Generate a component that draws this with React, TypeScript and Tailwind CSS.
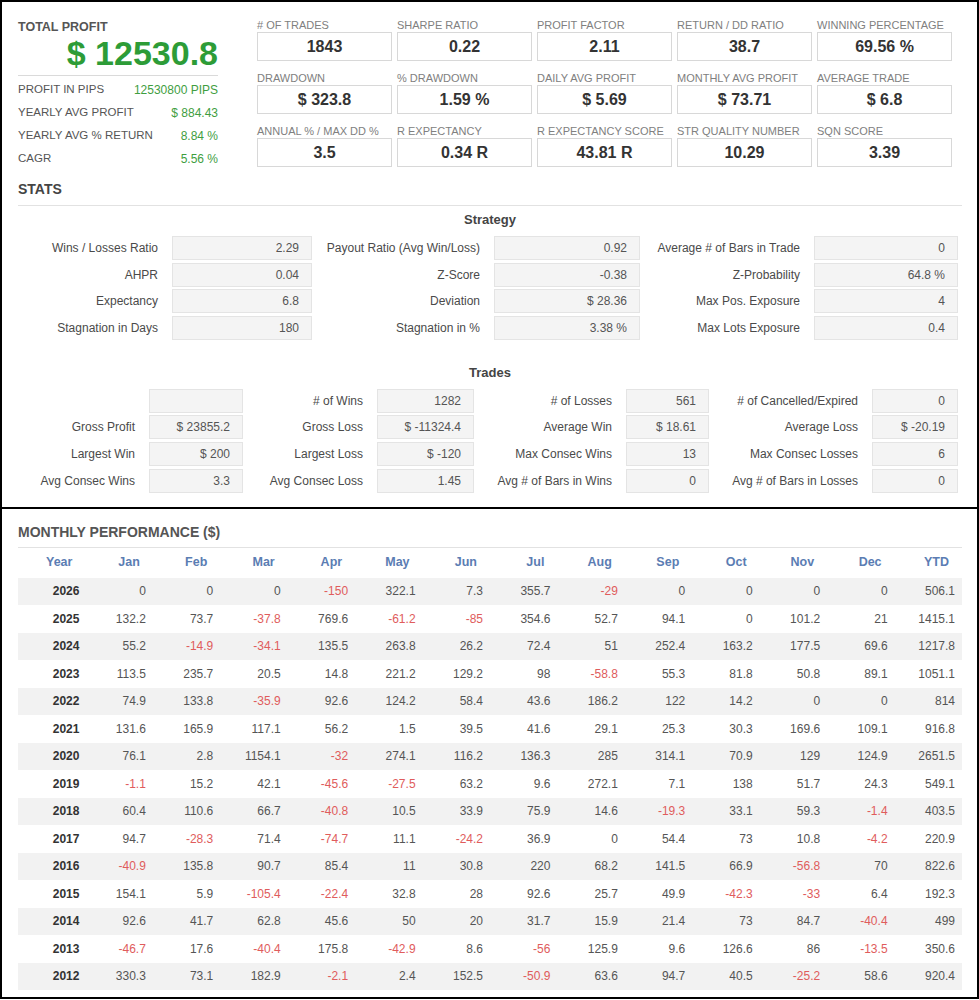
const metrics: [string, string][][] = [
  [
    ['# of Trades', '1843'],
    ['Sharpe Ratio', '0.22'],
    ['Profit Factor', '2.11'],
    ['Return / DD Ratio', '38.7'],
    ['Winning Percentage', '69.56 %'],
  ],
  [
    ['Drawdown', '$ 323.8'],
    ['% Drawdown', '1.59 %'],
    ['Daily Avg Profit', '$ 5.69'],
    ['Monthly Avg Profit', '$ 73.71'],
    ['Average Trade', '$ 6.8'],
  ],
  [
    ['Annual % / Max DD %', '3.5'],
    ['R Expectancy', '0.34 R'],
    ['R Expectancy Score', '43.81 R'],
    ['STR Quality Number', '10.29'],
    ['SQN Score', '3.39'],
  ],
];

const summary: [string, string][] = [
  ['PROFIT IN PIPS', '12530800 PIPS'],
  ['YEARLY AVG PROFIT', '$ 884.43'],
  ['YEARLY AVG % RETURN', '8.84 %'],
  ['CAGR', '5.56 %'],
];

const strategy: string[][] = [
  ['Wins / Losses Ratio', '2.29', 'Payout Ratio (Avg Win/Loss)', '0.92', 'Average # of Bars in Trade', '0'],
  ['AHPR', '0.04', 'Z-Score', '-0.38', 'Z-Probability', '64.8 %'],
  ['Expectancy', '6.8', 'Deviation', '$ 28.36', 'Max Pos. Exposure', '4'],
  ['Stagnation in Days', '180', 'Stagnation in %', '3.38 %', 'Max Lots Exposure', '0.4'],
];

const trades: string[][] = [
  ['', '', '# of Wins', '1282', '# of Losses', '561', '# of Cancelled/Expired', '0'],
  ['Gross Profit', '$ 23855.2', 'Gross Loss', '$ -11324.4', 'Average Win', '$ 18.61', 'Average Loss', '$ -20.19'],
  ['Largest Win', '$ 200', 'Largest Loss', '$ -120', 'Max Consec Wins', '13', 'Max Consec Losses', '6'],
  ['Avg Consec Wins', '3.3', 'Avg Consec Loss', '1.45', 'Avg # of Bars in Wins', '0', 'Avg # of Bars in Losses', '0'],
];

const months = ['Year', 'Jan', 'Feb', 'Mar', 'Apr', 'May', 'Jun', 'Jul', 'Aug', 'Sep', 'Oct', 'Nov', 'Dec', 'YTD'];

const monthly: string[][] = [
  ['2026', '0', '0', '0', '-150', '322.1', '7.3', '355.7', '-29', '0', '0', '0', '0', '506.1'],
  ['2025', '132.2', '73.7', '-37.8', '769.6', '-61.2', '-85', '354.6', '52.7', '94.1', '0', '101.2', '21', '1415.1'],
  ['2024', '55.2', '-14.9', '-34.1', '135.5', '263.8', '26.2', '72.4', '51', '252.4', '163.2', '177.5', '69.6', '1217.8'],
  ['2023', '113.5', '235.7', '20.5', '14.8', '221.2', '129.2', '98', '-58.8', '55.3', '81.8', '50.8', '89.1', '1051.1'],
  ['2022', '74.9', '133.8', '-35.9', '92.6', '124.2', '58.4', '43.6', '186.2', '122', '14.2', '0', '0', '814'],
  ['2021', '131.6', '165.9', '117.1', '56.2', '1.5', '39.5', '41.6', '29.1', '25.3', '30.3', '169.6', '109.1', '916.8'],
  ['2020', '76.1', '2.8', '1154.1', '-32', '274.1', '116.2', '136.3', '285', '314.1', '70.9', '129', '124.9', '2651.5'],
  ['2019', '-1.1', '15.2', '42.1', '-45.6', '-27.5', '63.2', '9.6', '272.1', '7.1', '138', '51.7', '24.3', '549.1'],
  ['2018', '60.4', '110.6', '66.7', '-40.8', '10.5', '33.9', '75.9', '14.6', '-19.3', '33.1', '59.3', '-1.4', '403.5'],
  ['2017', '94.7', '-28.3', '71.4', '-74.7', '11.1', '-24.2', '36.9', '0', '54.4', '73', '10.8', '-4.2', '220.9'],
  ['2016', '-40.9', '135.8', '90.7', '85.4', '11', '30.8', '220', '68.2', '141.5', '66.9', '-56.8', '70', '822.6'],
  ['2015', '154.1', '5.9', '-105.4', '-22.4', '32.8', '28', '92.6', '25.7', '49.9', '-42.3', '-33', '6.4', '192.3'],
  ['2014', '92.6', '41.7', '62.8', '45.6', '50', '20', '31.7', '15.9', '21.4', '73', '84.7', '-40.4', '499'],
  ['2013', '-46.7', '17.6', '-40.4', '175.8', '-42.9', '8.6', '-56', '125.9', '9.6', '126.6', '86', '-13.5', '350.6'],
  ['2012', '330.3', '73.1', '182.9', '-2.1', '2.4', '152.5', '-50.9', '63.6', '94.7', '40.5', '-25.2', '58.6', '920.4'],
];

function StatGrid({ rows, cols }: { rows: string[][]; cols: string }) {
  return (
    <div className={`grid ${cols} gap-y-[2.6px]`}>
      {rows.map((row, r) =>
        row.map((cell, c) =>
          c % 2 === 0 ? (
            <div key={`${r}-${c}`} className="h-[24px] pr-[14px] flex items-center justify-end text-[12px] text-[#4a4a4a] whitespace-nowrap">
              {cell}
            </div>
          ) : (
            <div key={`${r}-${c}`} className="h-[24px] pr-[12px] flex items-center justify-end bg-[#f4f4f4] border border-[#e4e4e4] text-[12px] text-[#555]">
              {cell}
            </div>
          ),
        ),
      )}
    </div>
  );
}

export default function App() {
  return (
    <div className="w-[979px] h-[999px] bg-white border-2 border-black font-['Liberation_Sans',Arial,sans-serif] flex flex-col">
      {/* top panel */}
      <div className="pl-[16px] pr-[15px] pt-[16px] pb-[14px]">
        <div className="flex">
          <div className="w-[200px] pt-[2px]">
            <div className="h-[14px] leading-[14px] text-[12.5px] font-bold text-[#555]">TOTAL PROFIT</div>
            <div className="h-[38px] leading-[38px] text-right text-[34px] font-bold text-[#2d9c37]">$ 12530.8</div>
            <div className="mt-[3px] border-b border-[#dadada]" />
            <div className="mt-[2px]">
              {summary.map(([k, v]) => (
                <div key={k} className="h-[23px] flex items-center justify-between">
                  <span className="text-[11.5px] text-[#555]">{k}</span>
                  <span className="text-[12px] text-[#3f9e3f]">{v}</span>
                </div>
              ))}
            </div>
          </div>
          <div className="ml-[39px] flex flex-col gap-[10px]">
            {metrics.map((row, i) => (
              <div key={i} className="grid grid-cols-[repeat(5,135px)] gap-x-[5px]">
                {row.map(([label, value]) => (
                  <div key={label}>
                    <div className="h-[14px] leading-[14px] text-[11px] uppercase text-[#808080] whitespace-nowrap">{label}</div>
                    <div className="h-[29px] border border-[#d8d8d8] flex items-center justify-center text-[16px] font-bold text-[#333]">
                      {value}
                    </div>
                  </div>
                ))}
              </div>
            ))}
          </div>
        </div>

        <div className="mt-[11px] pb-[8px] border-b border-[#e2e2e2] h-[25px]">
          <div className="h-[16px] leading-[16px] text-[14px] font-bold text-[#444]">STATS</div>
        </div>

        <div className="mt-[6px] h-[16px] leading-[16px] text-center text-[13px] font-bold text-[#444]">Strategy</div>
        <div className="mt-[8px]">
          <StatGrid rows={strategy} cols="grid-cols-[154px_140px_182px_146px_174px_144px]" />
        </div>

        <div className="mt-[25px] h-[16px] leading-[16px] text-center text-[13px] font-bold text-[#444]">Trades</div>
        <div className="mt-[8px]">
          <StatGrid rows={trades} cols="grid-cols-[131px_94px_134px_97px_152px_83px_163px_86px]" />
        </div>
      </div>

      {/* monthly performance */}
      <div className="border-t-2 border-black pl-[16px] pr-[15px] pt-[15px]">
        <div className="pb-[7px] border-b border-[#e2e2e2]">
          <div className="h-[16px] leading-[16px] text-[14px] font-bold text-[#555]">MONTHLY PERFORMANCE ($)</div>
        </div>
        <div className="grid grid-cols-[repeat(14,minmax(0,1fr))] h-[30px] items-center">
          {months.map((m) => (
            <div key={m} className="text-right pr-[13px] text-[12.5px] font-bold text-[#5b7db3]">
              {m}
            </div>
          ))}
        </div>
        {monthly.map((row, i) => (
          <div
            key={row[0]}
            className={`grid grid-cols-[repeat(14,minmax(0,1fr))] h-[27.5px] items-center ${i % 2 === 0 ? 'bg-[#f2f2f2]' : 'bg-white'}`}
          >
            {row.map((cell, c) =>
              c === 0 ? (
                <div key={c} className="text-right pr-[6px] text-[12px] font-bold text-[#333]">
                  {cell}
                </div>
              ) : (
                <div
                  key={c}
                  className={`text-right pr-[7px] text-[12px] ${cell.startsWith('-') ? 'text-[#e05c5c]' : 'text-[#555]'}`}
                >
                  {cell}
                </div>
              ),
            )}
          </div>
        ))}
      </div>
    </div>
  );
}
